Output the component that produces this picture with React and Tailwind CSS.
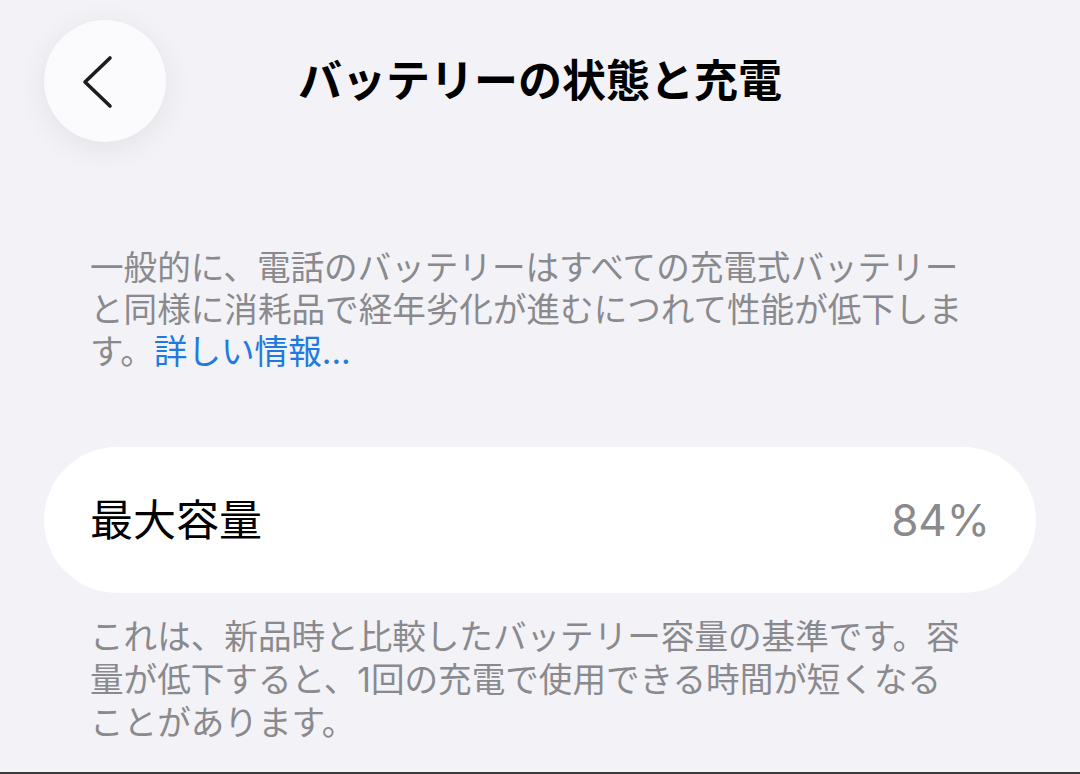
import { useState } from 'react';

const jp = { fontFamily: 'Inter, "Noto Sans CJK JP", "Noto Sans", sans-serif' };

function BackButton({ onClick }) {
  return (
    <button
      onClick={onClick}
      className="w-[122px] h-[122px] rounded-full bg-[#fbfbfd] shadow-[0_6px_30px_rgba(0,0,0,0.07)] flex items-center justify-center"
    >
      <svg width="122" height="122" viewBox="0 0 122 122" fill="none">
        <polyline
          points="66,38 41,62 66,86"
          stroke="#1c1c1e"
          strokeWidth="3.6"
          strokeLinecap="round"
          strokeLinejoin="round"
        />
      </svg>
    </button>
  );
}

export default function App() {
  const [capacity] = useState(84);

  return (
    <div className="h-[774px] bg-[#f2f2f7] flex flex-col overflow-hidden" style={jp}>
      {/* ヘッダー */}
      <header className="grid grid-cols-[122px_1fr_122px] items-center px-[44px] pt-[20px]">
        <BackButton />
        <h1 className="text-center text-[44px] leading-none font-bold text-black tracking-normal">
          バッテリーの状態と充電
        </h1>
        <div />
      </header>

      <p className="mt-[105px] px-[90px] text-[33.6px] leading-[42px] text-[#8a8a8e] whitespace-nowrap">
        一般的に、電話のバッテリーはすべての充電式バッテリー<br />
        と同様に消耗品で経年劣化が進むにつれて性能が低下しま<br />
        す。<span className="text-[#1f7ae0]">詳しい情報...</span>
      </p>

      <section className="mt-[74px] mx-[44px] h-[146px] rounded-full bg-white flex items-center justify-between px-[46px]">
        <span className="text-[43px] leading-none text-black">最大容量</span>
        <span className="text-[44px] leading-none text-[#8a8a8e]">{capacity}%</span>
      </section>

      <p className="mt-[22px] px-[90px] text-[33.6px] leading-[43px] text-[#8a8a8e] whitespace-nowrap">
        これは、新品時と比較したバッテリー容量の基準です。容<br />
        量が低下すると、1回の充電で使用できる時間が短くなる<br />
        ことがあります。
      </p>

      <div className="mt-auto h-[2px] bg-[#3a3a3c]" />
    </div>
  );
}
